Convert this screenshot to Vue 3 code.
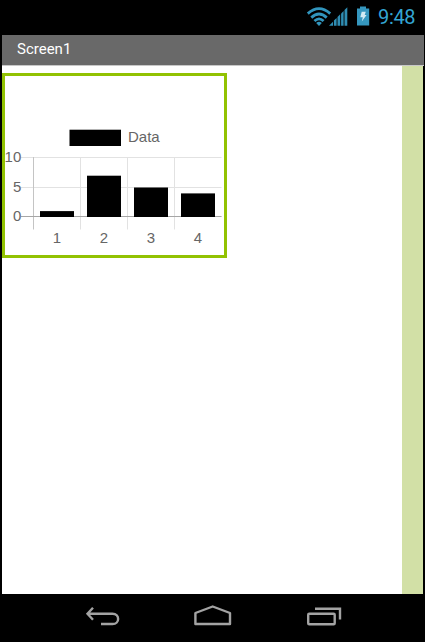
<script setup>
const baseline = 217
const unit = 5.9
const bars = [
  { label: '1', value: 1, x: 40 },
  { label: '2', value: 7, x: 87 },
  { label: '3', value: 5, x: 134 },
  { label: '4', value: 4, x: 181 },
]
const ticks = [
  { label: '10', y: 157.5 },
  { label: '5', y: 187.5 },
  { label: '0', y: 216.5 },
]
const columns = [80.5, 127.5, 174.5]
</script>

<template>
  <div class="phone">
    <header class="status">
      <svg class="status-icons" width="66" height="24" viewBox="305 5 66 24">
        <g fill="none" stroke="#3195bd" stroke-width="2.8">
          <path d="M307.8 13.6Q319 3.6 330.2 13.6" />
          <path d="M311.3 17.6Q319 10.5 326.7 17.6" />
          <path d="M314.4 21Q319 16.8 323.6 21" />
        </g>
        <path d="M316.2 23Q319 20.5 321.8 23L319 26Z" fill="#3195bd" />
        <g fill="#2f8db3">
          <path d="M329 25.8L333 21.8V25.8Z" />
          <path d="M333.9 25.8V20.6L336.6 18V25.8Z" />
          <path d="M337.5 25.8V17L340.2 14.3V25.8Z" />
          <path d="M341.1 25.8V13.4L343.6 10.9V25.8Z" />
          <path d="M344.5 25.8V10L347.3 7.2V25.8Z" />
        </g>
        <path d="M357 8.5H360V6.5H366V8.5H369.2V25.6H357Z" fill="#3597bf" />
        <path d="M361.7 11.8H365.8L364.7 15H366.6L361.8 21.6L362.8 17.2H360.3Z" fill="#d3ebf4" />
      </svg>
      <span class="clock">9:48</span>
    </header>
    <div class="title">Screen1</div>
    <main class="body">
      <div class="canvas">
        <div class="chart">
          <svg width="219" height="179" viewBox="5 76 219 179">
            <rect x="69.5" y="129.7" width="51.5" height="16.3" />
            <text x="128" y="142">Data</text>
            <g stroke="#e2e2e2">
              <path v-for="t in ticks" :key="t.label" :d="`M21 ${t.y}H221.5`" />
              <path v-for="x in columns" :key="x" :d="`M${x} 157V229.5`" />
            </g>
            <path d="M33.5 157V229.5" stroke="#c4c4c4" />
            <path d="M21 216.5H221.5" stroke="#a6a6a6" />
            <rect
              v-for="b in bars"
              :key="b.label"
              :x="b.x"
              :y="baseline - b.value * unit"
              width="34"
              :height="b.value * unit"
            />
            <text v-for="t in ticks" :key="t.label" x="21.3" :y="t.y + 4.5" text-anchor="end">{{ t.label }}</text>
            <text v-for="b in bars" :key="b.label" :x="b.x + 17" y="243" text-anchor="middle">{{ b.label }}</text>
          </svg>
        </div>
      </div>
      <div class="gutter"></div>
    </main>
    <nav class="nav">
      <svg width="270" height="30" viewBox="80 600 270 30" fill="none" stroke="#a3a3a3" stroke-width="2.4">
        <path d="M93 607.8L87.5 613.8L93 619.8M88 613.8H112.5C120 613.8 120 624 112.5 624H101" />
        <path d="M195.4 624V613L212.7 606.5L230 613V624Z" stroke-linejoin="round" />
        <rect x="308.2" y="613.7" width="26.5" height="10.5" rx="1" />
        <path d="M315 608.8H340V619.5" />
      </svg>
    </nav>
  </div>
</template>

<style>
body {
  margin: 0;
  background: #000;
}
</style>

<style scoped>
.phone {
  box-sizing: border-box;
  width: 425px;
  height: 642px;
  padding: 0 1px 0 2px;
  display: flex;
  flex-direction: column;
  background: #000;
}
.status {
  height: 35px;
  box-sizing: border-box;
  padding: 5px 8px 0 0;
  display: flex;
  justify-content: flex-end;
  align-items: flex-start;
  gap: 7px;
}
.status-icons {
  display: block;
}
.clock {
  width: 38px;
  font: 400 20px/24px Roboto, sans-serif;
  letter-spacing: -0.35px;
  color: #33a5d3;
  white-space: nowrap;
}
.title {
  height: 31px;
  box-sizing: border-box;
  padding-left: 15px;
  border-bottom: 1px solid #c8c8c8;
  background: #696969;
  color: #fff;
  font: 400 15px/29px Roboto, sans-serif;
}
.body {
  height: 528px;
  margin-right: 1px;
  display: flex;
  background: #fff;
}
.canvas {
  flex: 1;
  padding-top: 7px;
}
.chart {
  width: 219px;
  height: 179px;
  border: 3px solid #92c202;
}
.chart svg {
  display: block;
}
.chart text {
  font: 15px "Liberation Sans", Arial, sans-serif;
  fill: #666;
}
.gutter {
  width: 21px;
  background: #d2e0a6;
}
.nav {
  height: 48px;
  box-sizing: border-box;
  padding: 6px 0 0 78px;
}
.nav svg {
  display: block;
}
</style>
